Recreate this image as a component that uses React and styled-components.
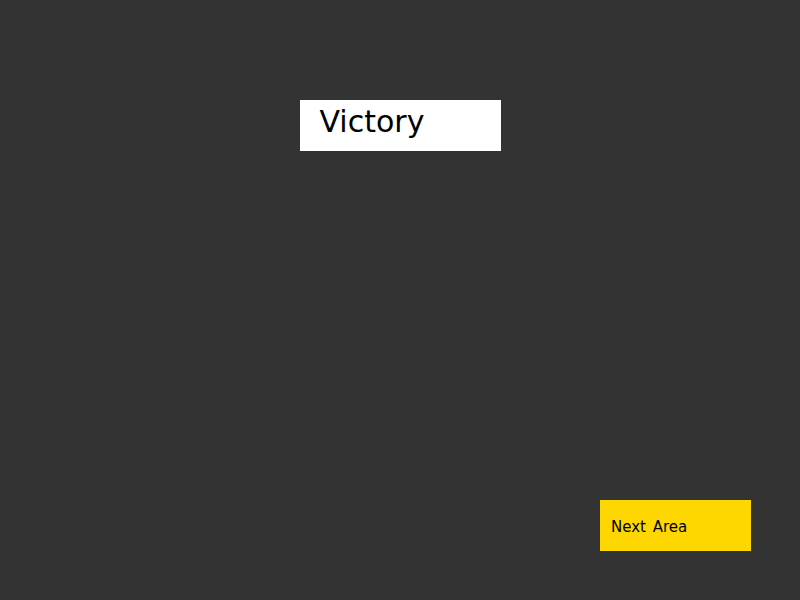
import React from 'react';
import styled, { createGlobalStyle } from 'styled-components';

const Global = createGlobalStyle`
  html, body {
    margin: 0;
    padding: 0;
    background: #333333;
  }
`;

const Screen = styled.div`
  width: 800px;
  height: 600px;
  box-sizing: border-box;
  background: #333333;
  display: flex;
  flex-direction: column;
  justify-content: space-between;
  padding: 100px 49px 49px 0;
  font-family: "DejaVu Sans", sans-serif;
`;

const Banner = styled.div`
  align-self: center;
  margin-left: 49px;
  width: 201px;
  height: 51px;
  box-sizing: border-box;
  background: #ffffff;
  color: #000000;
  padding: 7px 0 0 20px;
  font-size: 30px;
  line-height: 30px;
`;

const Footer = styled.div`
  display: flex;
  justify-content: flex-end;
`;

const NextButton = styled.button`
  width: 151px;
  height: 51px;
  box-sizing: border-box;
  border: none;
  background: #ffd700;
  color: #000000;
  font-family: inherit;
  font-size: 15px;
  word-spacing: 2px;
  text-align: left;
  padding: 2px 0 0 11px;
  cursor: pointer;
`;

const App = () => {
  return (
    <>
      <Global />
      <Screen>
        <Banner>Victory</Banner>
        <Footer>
          <NextButton>Next Area</NextButton>
        </Footer>
      </Screen>
    </>
  );
};

export default App;
